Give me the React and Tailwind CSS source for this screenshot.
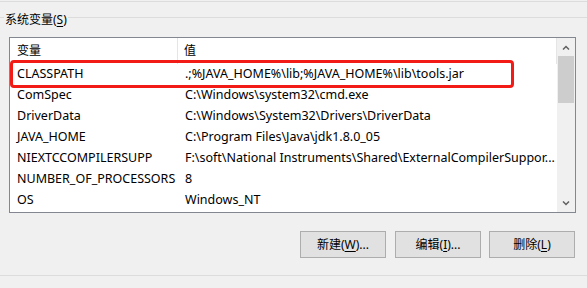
const rows = [
   ["CLASSPATH", ".;%JAVA_HOME%\\lib;%JAVA_HOME%\\lib\\tools.jar"],
   ["ComSpec", "C:\\Windows\\system32\\cmd.exe"],
   ["DriverData", "C:\\Windows\\System32\\Drivers\\DriverData"],
   ["JAVA_HOME", "C:\\Program Files\\Java\\jdk1.8.0_05"],
   ["NIEXTCCOMPILERSUPP", "F:\\soft\\National Instruments\\Shared\\ExternalCompilerSuppor..."],
   ["NUMBER_OF_PROCESSORS", "8"],
   ["OS", "Windows_NT"],
];

const Chevron = ({ up }) => (
   <svg width="8" height="5" viewBox="0 0 8 5" className="text-[#606060]">
      <polyline
         points={up ? "1,4.5 4,1.5 7,4.5" : "1,0.5 4,3.5 7,0.5"}
         fill="none"
         stroke="currentColor"
         strokeWidth="1.5"
      />
   </svg>
);

const Btn = ({ children, className = "" }) => (
   <button className={`w-[86px] h-[27px] bg-[#e1e1e1] border border-[#adadad] text-[12px] leading-none text-black ${className}`}>
      {children}
   </button>
);

export default function App() {
   return (
      <div
         className="w-[587px] h-[288px] bg-[#f0f0f0] overflow-hidden text-[12px] text-black"
         style={{ fontFamily: '"Noto Sans", "Noto Sans CJK SC", sans-serif' }}
      >
         <div className="mt-px h-px bg-[#dcdcdc]" />

         {/* group box title */}
         <div className="flex items-start mt-[10px] h-[16px]">
            <div className="w-[4px] h-px mt-[5px] bg-[#dcdcdc]" />
            <span className="px-px leading-[16px]">
               系统变量(<span className="underline underline-offset-2">S</span>)
            </span>
            <div className="flex-1 h-px mt-[5px] bg-[#dcdcdc]" />
         </div>

         {/* list view */}
         <div className="relative ml-[9px] mt-[9px] w-[567px] h-[176px] border border-[#828790] bg-white flex">
            <div className="w-[547px] flex flex-col">
               <div className="flex h-[26px] items-center">
                  <div className="w-[168px] h-full flex items-center pl-[7px] border-r border-[#e5e5e5]">变量</div>
                  <div className="flex-1 h-full flex items-center pl-[6px] border-r border-[#e5e5e5]">值</div>
               </div>
               {rows.map(([k, v]) => (
                  <div key={k} className="flex h-[21px] items-center whitespace-nowrap text-[12.5px]">
                     <div className="w-[169px] pl-[7px] overflow-hidden">{k}</div>
                     <div className="flex-1 pl-[6px] overflow-hidden">{v}</div>
                  </div>
               ))}
            </div>

            {/* scrollbar */}
            <div className="w-[18px] bg-[#f0f0f0] flex flex-col">
               <div className="h-[18px] flex items-center justify-center">
                  <Chevron up />
               </div>
               <div className="mx-px h-[47px] bg-[#cdcdcd]" />
               <div className="flex-1" />
               <div className="h-[18px] flex items-center justify-center">
                  <Chevron />
               </div>
            </div>

            {/* highlight annotation */}
            <div className="absolute left-0 top-[22px] w-[504px] h-[28px] border-[3px] border-[#f31b16] rounded-[4px]" />
         </div>

         {/* buttons */}
         <div className="flex mt-[18px] ml-[300px]">
            <Btn>
               新建(<span className="underline underline-offset-2">W</span>)...
            </Btn>
            <Btn className="ml-[9px]">
               编辑(<span className="underline underline-offset-2">I</span>)...
            </Btn>
            <Btn className="ml-[8px]">
               删除(<span className="underline underline-offset-2">L</span>)
            </Btn>
         </div>

         <div className="mt-[17px] h-px bg-[#dcdcdc]" />
      </div>
   );
}
